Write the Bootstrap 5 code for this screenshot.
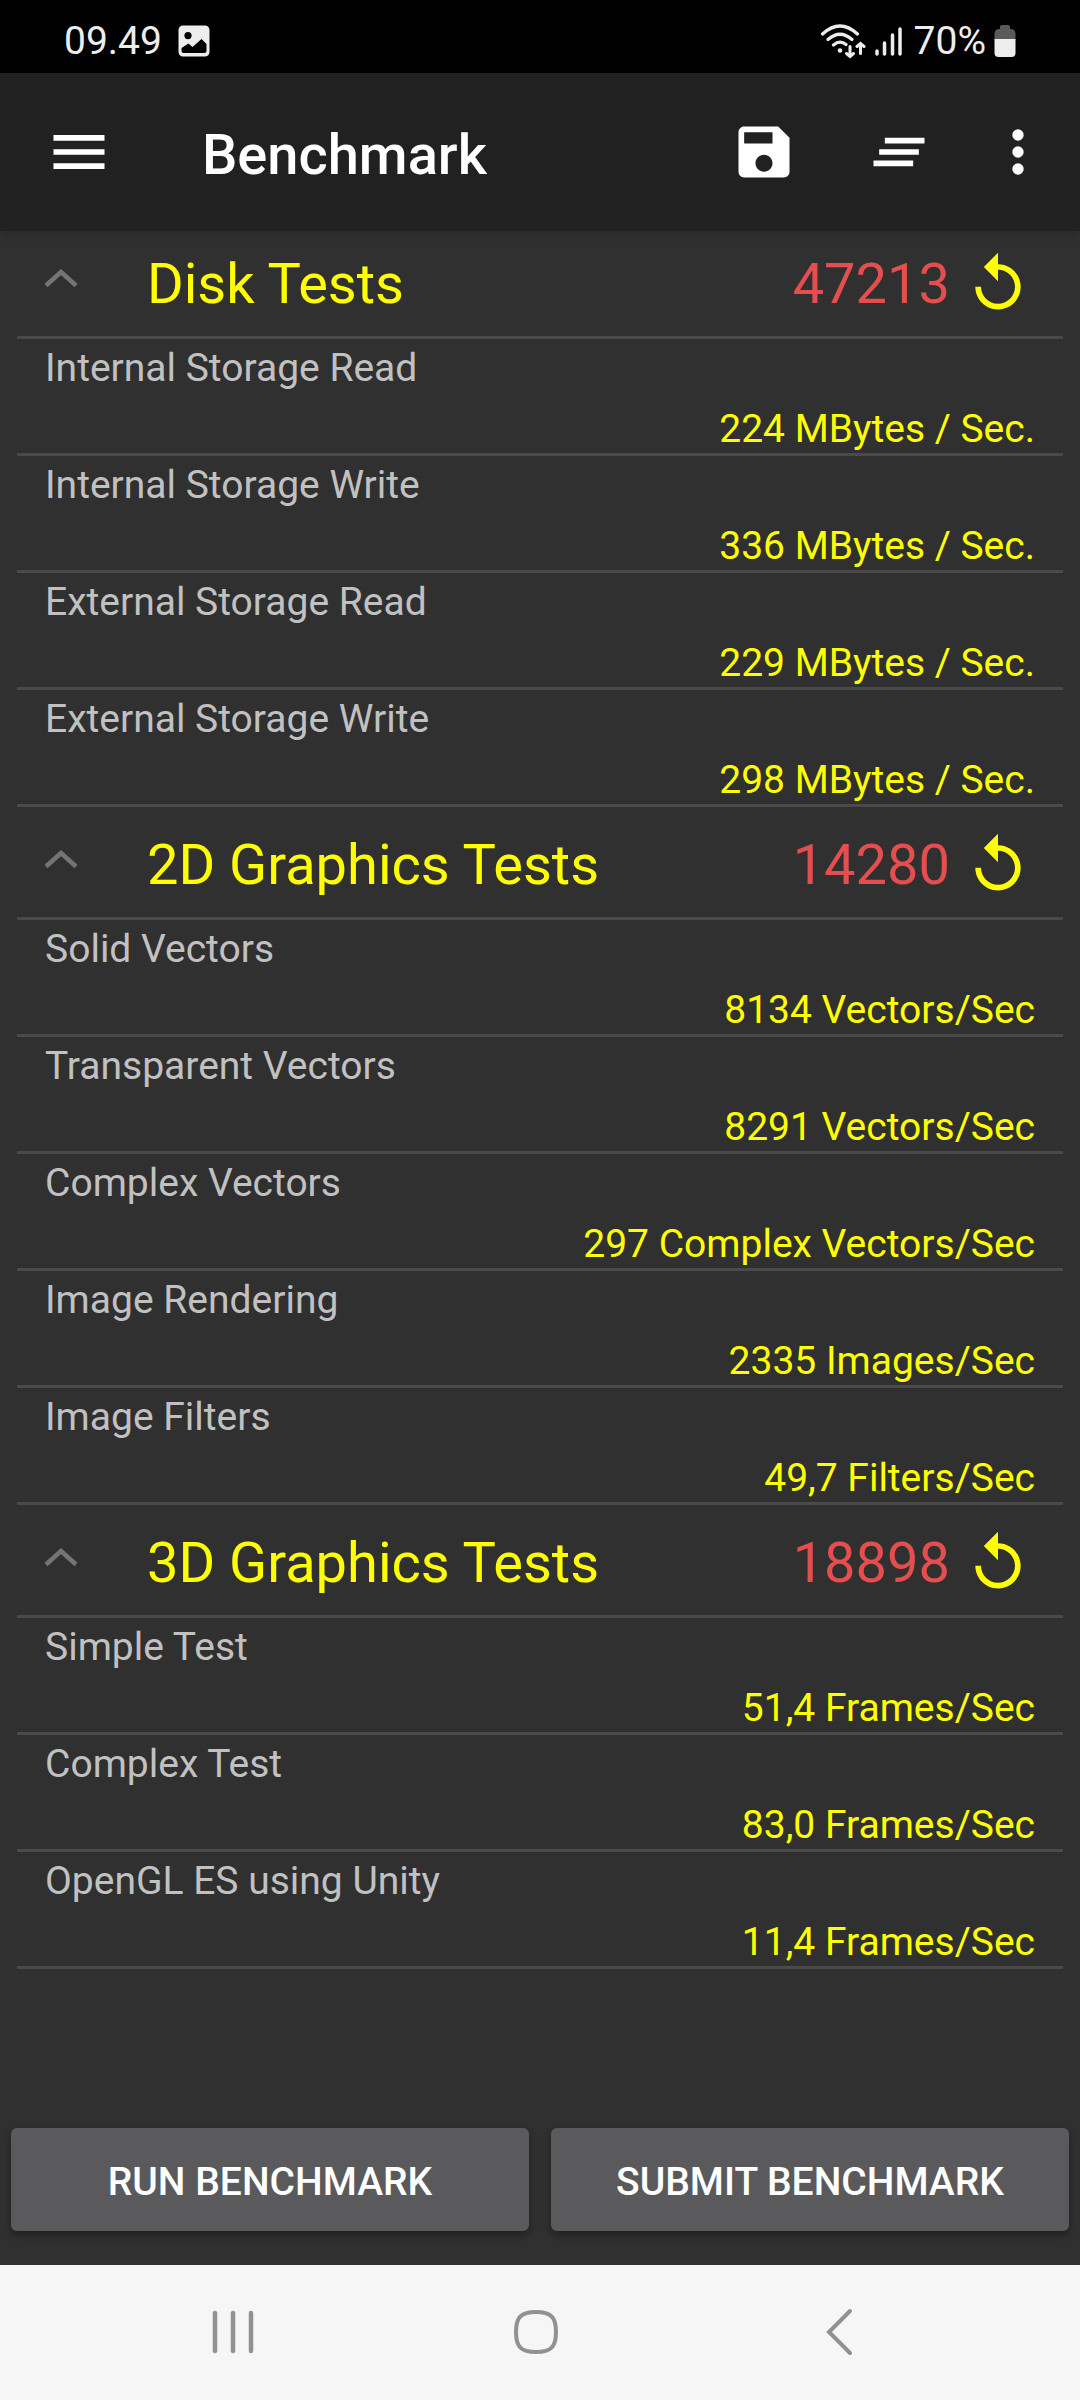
<!DOCTYPE html>
<html lang="en">
<head>
<meta charset="utf-8">
<meta name="viewport" content="width=device-width, initial-scale=1">
<title>Benchmark</title>
<link href="https://cdn.jsdelivr.net/npm/bootstrap@5.3.0/dist/css/bootstrap.min.css" rel="stylesheet">
<style>
  body { font-family: Roboto, "Noto Sans", sans-serif; background: #303030; color: #fff; }
  svg { display: block; flex: none; }
  .plain-btn { background: none; border: 0; padding: 0; color: inherit; display: flex; align-items: center; justify-content: center; }

  .status-bar { background: #000; color: #ededed; height: 73px; padding: 8px 64px 0; font-size: 39px; line-height: 44px; }
  .status-group { gap: 8px; }

  .app-bar { background: #212121; height: 158px; padding: 0 10px 0 45px; box-shadow: 0 2px 10px rgba(0,0,0,.2); position: relative; }
  .app-title { font-size: 56px; line-height: 66px; font-weight: 500; margin-left: 89px; padding-top: 6px; }
  .action { width: 135px; height: 100px; }
  .action-more { width: 104px; }

  .results { padding: 0 17px; }
  .test-head { padding: 24px 31px 18px 27px; border-bottom: 3px solid #4a4a4a; }
  .test-group:first-child .test-head { padding-top: 19px; }
  .test-title, .score { font-size: 56px; line-height: 68px; font-weight: 400; }
  .test-title { color: #ff0; gap: 69px; }
  .score { color: #e54e4e; margin-right: 14px; }
  .redo { color: #ff0; }
  .test-row { display: flex; flex-direction: column; gap: 15px; padding: 6px 28px 1px; border-bottom: 3px solid #4a4a4a; font-size: 39px; line-height: 46px; }
  .test-name { color: #c1c1c1; }
  .test-value { color: #ff0; text-align: right; }

  .bottom-actions { padding: 0 11px 34px; gap: 22px; }
  .main-btn { --bs-btn-bg: #5a5a5c; --bs-btn-color: #fff; --bs-btn-hover-bg: #68686a; --bs-btn-hover-color: #fff; --bs-btn-border-width: 0; --bs-btn-border-radius: 6px;
    height: 103px; padding: 4px 0 0; font-size: 39px; line-height: 46px; font-weight: 500; box-shadow: 0 4px 8px rgba(0,0,0,.35); }

  .system-nav { background: #f6f6f6; color: #919191; height: 135px; padding: 0 90px 2px 82px; }
  .system-nav .plain-btn { flex: 1 1 0; height: 100%; }
</style>
</head>
<body class="d-flex flex-column min-vh-100">

<div class="status-bar d-flex align-items-center justify-content-between">
  <div class="d-flex align-items-center gap-3">
    <span>09.49</span>
    <svg width="32" height="32" viewBox="0 0 32 32" aria-hidden="true">
      <path fill="#ededed" fill-rule="evenodd" d="M5 .5h22A4.500 4.500 0 0 1 31.500 5v22a4.500 4.500 0 0 1-4.500 4.500H5A4.500 4.500 0 0 1 .5 27V5A4.500 4.500 0 0 1 5 .5zM10 7a3.600 3.600 0 1 0 0 7.200A3.600 3.600 0 0 0 10 7zM3.500 23v3a2 2 0 0 0 2 2h21a2 2 0 0 0 2-2v-7l-5-5-9 8-4-3.500z"/>
    </svg>
  </div>
  <div class="status-group d-flex align-items-center">
    <svg width="46" height="36" viewBox="0 0 46 36" fill="none" stroke="#ededed" stroke-width="3.200" stroke-linecap="round" aria-hidden="true">
      <path d="M2.500 11Q20-5 37.500 11M8 16.500Q20 6 32 16.500M13.500 22Q20 16.500 26 21.500"/>
      <circle cx="20" cy="27.500" r="2.300" fill="#ededed" stroke="none"/>
      <path d="M30 23.500v9.500M26.500 30.500l3.500 3 3.500-3M40.500 30.500V21M37 23.500l3.500-3 3.500 3" stroke-width="3"/>
    </svg>
    <svg width="32" height="32" viewBox="0 0 32 32" stroke="#ededed" stroke-width="3.500" stroke-linecap="round" aria-hidden="true">
      <path d="M3 26v3M10.500 18v11M18.500 10v19M26 4v25"/>
    </svg>
    <span>70%</span>
    <svg width="22" height="32" viewBox="0 0 22 32" aria-hidden="true">
      <path fill="#5a5a5a" d="M6 1.500Q6 0 8 0h6q2 0 2 1.500V4h2q3.500 1 3.500 5v6H.5V9Q.5 5 4 4h2z"/>
      <path fill="#ededed" d="M.5 14h21v14q0 4-4 4h-13q-4 0-4-4z"/>
    </svg>
  </div>
</div>

<header class="app-bar d-flex align-items-center">
  <button type="button" class="plain-btn" aria-label="Menu">
    <svg width="68" height="68" viewBox="0 0 24 24" fill="currentColor"><path d="M3 18h18v-2H3v2zm0-5h18v-2H3v2zm0-7v2h18V6H3z"/></svg>
  </button>
  <h1 class="app-title mb-0 me-auto">Benchmark</h1>
  <button type="button" class="plain-btn action" aria-label="Save">
    <svg width="68" height="68" viewBox="0 0 24 24" fill="currentColor"><path d="M17 3H5c-1.110 0-2 .9-2 2v14c0 1.100.89 2 2 2h14c1.100 0 2-.9 2-2V7l-4-4zm-5 16c-1.660 0-3-1.340-3-3s1.340-3 3-3 3 1.340 3 3-1.340 3-3 3zm3-10H5V5h10v4z"/></svg>
  </button>
  <button type="button" class="plain-btn action" aria-label="Clear all">
    <svg width="68" height="68" viewBox="0 0 24 24" fill="currentColor"><path d="M5 13h14v-2H5v2zm-2 4h14v-2H3v2zM7 7v2h14V7H7z"/></svg>
  </button>
  <button type="button" class="plain-btn action action-more" aria-label="More options">
    <svg width="68" height="68" viewBox="0 0 24 24" fill="currentColor"><circle cx="12" cy="6" r="2"/><circle cx="12" cy="12" r="2"/><circle cx="12" cy="18" r="2"/></svg>
  </button>
</header>

<svg width="0" height="0" class="d-none" aria-hidden="true">
  <symbol id="chevron" viewBox="0 0 34 68"><path d="M2 35.500 17 22l15 13.500" fill="none" stroke="#747474" stroke-width="4.500"/></symbol>
  <symbol id="replay" viewBox="0 0 24 24"><path fill="currentColor" d="M12 5V1L7 6l5 5V7c3.310 0 6 2.690 6 6s-2.690 6-6 6-6-2.690-6-6H4c0 4.420 3.580 8 8 8s8-3.580 8-8-3.580-8-8-8z"/></symbol>
</svg>

<main class="results flex-grow-1">
  <section class="test-group">
    <div class="test-head d-flex align-items-center">
      <h2 class="mb-0 me-auto"><button type="button" class="plain-btn test-title" data-bs-toggle="collapse" data-bs-target="#disk" aria-expanded="true"><svg width="34" height="68"><use href="#chevron"/></svg>Disk Tests</button></h2>
      <span class="score">47213</span>
      <button type="button" class="plain-btn redo" aria-label="Repeat Disk Tests"><svg width="68" height="68"><use href="#replay"/></svg></button>
    </div>
    <ul class="list-unstyled mb-0 collapse show" id="disk">
      <li class="test-row"><span class="test-name">Internal Storage Read</span><span class="test-value">224 MBytes / Sec.</span></li>
      <li class="test-row"><span class="test-name">Internal Storage Write</span><span class="test-value">336 MBytes / Sec.</span></li>
      <li class="test-row"><span class="test-name">External Storage Read</span><span class="test-value">229 MBytes / Sec.</span></li>
      <li class="test-row"><span class="test-name">External Storage Write</span><span class="test-value">298 MBytes / Sec.</span></li>
    </ul>
  </section>

  <section class="test-group">
    <div class="test-head d-flex align-items-center">
      <h2 class="mb-0 me-auto"><button type="button" class="plain-btn test-title" data-bs-toggle="collapse" data-bs-target="#g2d" aria-expanded="true"><svg width="34" height="68"><use href="#chevron"/></svg>2D Graphics Tests</button></h2>
      <span class="score">14280</span>
      <button type="button" class="plain-btn redo" aria-label="Repeat 2D Graphics Tests"><svg width="68" height="68"><use href="#replay"/></svg></button>
    </div>
    <ul class="list-unstyled mb-0 collapse show" id="g2d">
      <li class="test-row"><span class="test-name">Solid Vectors</span><span class="test-value">8134 Vectors/Sec</span></li>
      <li class="test-row"><span class="test-name">Transparent Vectors</span><span class="test-value">8291 Vectors/Sec</span></li>
      <li class="test-row"><span class="test-name">Complex Vectors</span><span class="test-value">297 Complex Vectors/Sec</span></li>
      <li class="test-row"><span class="test-name">Image Rendering</span><span class="test-value">2335 Images/Sec</span></li>
      <li class="test-row"><span class="test-name">Image Filters</span><span class="test-value">49,7 Filters/Sec</span></li>
    </ul>
  </section>

  <section class="test-group">
    <div class="test-head d-flex align-items-center">
      <h2 class="mb-0 me-auto"><button type="button" class="plain-btn test-title" data-bs-toggle="collapse" data-bs-target="#g3d" aria-expanded="true"><svg width="34" height="68"><use href="#chevron"/></svg>3D Graphics Tests</button></h2>
      <span class="score">18898</span>
      <button type="button" class="plain-btn redo" aria-label="Repeat 3D Graphics Tests"><svg width="68" height="68"><use href="#replay"/></svg></button>
    </div>
    <ul class="list-unstyled mb-0 collapse show" id="g3d">
      <li class="test-row"><span class="test-name">Simple Test</span><span class="test-value">51,4 Frames/Sec</span></li>
      <li class="test-row"><span class="test-name">Complex Test</span><span class="test-value">83,0 Frames/Sec</span></li>
      <li class="test-row"><span class="test-name">OpenGL ES using Unity</span><span class="test-value">11,4 Frames/Sec</span></li>
    </ul>
  </section>
</main>

<div class="bottom-actions d-flex">
  <button type="button" class="btn main-btn w-50">RUN BENCHMARK</button>
  <button type="button" class="btn main-btn w-50">SUBMIT BENCHMARK</button>
</div>

<nav class="system-nav d-flex align-items-center" aria-label="System">
  <button type="button" class="plain-btn" aria-label="Recent apps">
    <svg width="48" height="48" viewBox="0 0 48 48" stroke="currentColor" stroke-width="4.500" stroke-linecap="round"><path d="M6 5v38M24 5v38M42 5v38"/></svg>
  </button>
  <button type="button" class="plain-btn" aria-label="Home">
    <svg width="48" height="48" viewBox="0 0 48 48" fill="none" stroke="currentColor" stroke-width="4"><path d="M24 4C39 4 44 9 44 24S39 44 24 44 4 39 4 24 9 4 24 4z"/></svg>
  </button>
  <button type="button" class="plain-btn" aria-label="Back">
    <svg width="48" height="48" viewBox="0 0 48 48" fill="none" stroke="currentColor" stroke-width="4" stroke-linecap="round"><path d="M35 3 14 24l21 21"/></svg>
  </button>
</nav>

<script src="https://cdn.jsdelivr.net/npm/bootstrap@5.3.0/dist/js/bootstrap.bundle.min.js"></script>
</body>
</html>
